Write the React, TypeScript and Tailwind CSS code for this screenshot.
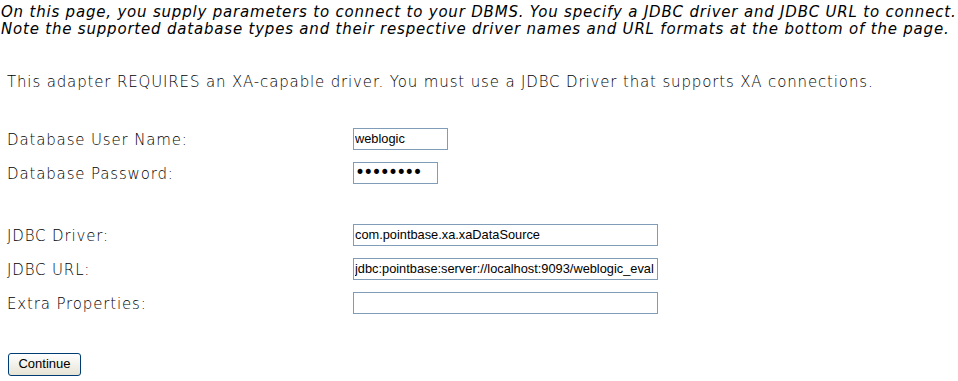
import React from "react";

const labelCls = "text-[15px] tracking-[0.85px] text-black font-extralight";
const inputCls =
  "h-[22px] border border-[#7f9db9] bg-white px-[1px] text-[12.8px] text-black outline-none [font-family:'Liberation_Sans',Arial,sans-serif]";

function Row({ label, children }: { label: string; children: React.ReactNode }) {
  return (
    <div className="flex h-[34px] items-center">
      <div className={`w-[346px] pt-[4px] ${labelCls}`}>{label}</div>
      {children}
    </div>
  );
}

export default function App() {
  return (
    <div className="min-h-[381px] w-[958px] bg-white [font-family:'DejaVu_Sans',sans-serif] text-black">
      <p className="pt-[4px] pl-[1px] text-[15px] font-extralight italic leading-[17px] tracking-[0.8px] whitespace-nowrap">
        On this page, you supply parameters to connect to your DBMS. You specify a JDBC driver and JDBC URL to connect.
        <br />
        Note the supported database types and their respective driver names and URL formats at the bottom of the page.
      </p>
      <p className={`mt-[33px] pl-[7px] ${labelCls}`}>
        This adapter REQUIRES an XA-capable driver. You must use a JDBC Driver that supports XA connections.
      </p>
      <div className="mt-[28px] pl-[7px]">
        <Row label="Database User Name:">
          <input className={`${inputCls} w-[95px]`} defaultValue="weblogic" />
        </Row>
        <Row label="Database Password:">
          <input
            type="password"
            className="h-[22px] w-[85px] border border-[#7f9db9] bg-white px-[1px] text-[17px] tracking-[-1.8px] text-black outline-none [font-family:'DejaVu_Sans',sans-serif]"
            defaultValue="weblogic"
          />
        </Row>
        <div className="h-[28px]" />
        <Row label="JDBC Driver:">
          <input className={`${inputCls} w-[305px]`} defaultValue="com.pointbase.xa.xaDataSource" />
        </Row>
        <Row label="JDBC URL:">
          <input
            className={`${inputCls} w-[305px]`}
            defaultValue="jdbc:pointbase:server://localhost:9093/weblogic_eval"
          />
        </Row>
        <Row label="Extra Properties:">
          <input className={`${inputCls} w-[305px]`} defaultValue="" />
        </Row>
      </div>
      <div className="mt-[33px] pl-[8px]">
        <button className="flex h-[23px] w-[73px] items-center justify-center rounded-[3px] border border-[#003c74] bg-gradient-to-b from-white to-[#e6e3d6] text-[13px] [font-family:'Liberation_Sans',Arial,sans-serif] text-black">
          Continue
        </button>
      </div>
    </div>
  );
}
